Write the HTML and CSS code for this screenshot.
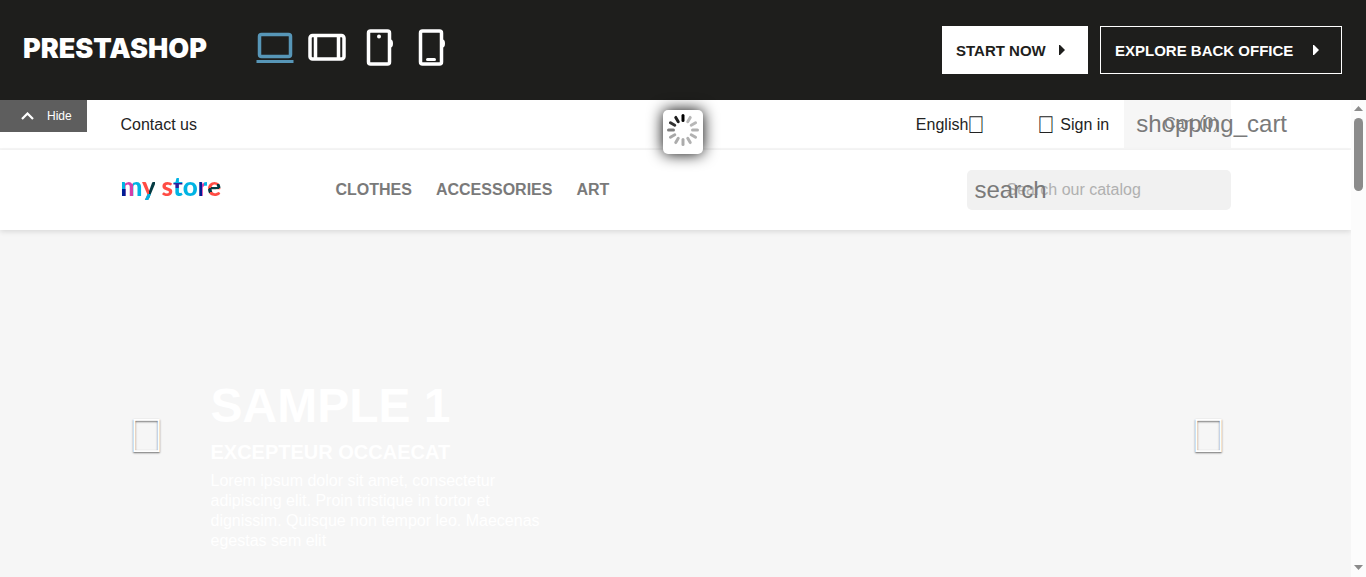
FILE: index.html
```
<!DOCTYPE html>
<html lang="en">
<head>
<meta charset="utf-8">
<title>PrestaShop demo</title>
<link rel="stylesheet" href="styles.css">
</head>
<body>
<header class="demo-bar">
  <a class="brand" href="#">PRESTASHOP</a>
  <div class="devices">
    <button class="device device-active" aria-label="Desktop">
      <svg width="38" height="40" viewBox="0 0 38 40" fill="none" stroke="currentColor" stroke-width="3.500"><rect x="3.500" y="6.500" width="31" height="22" rx="2"/><path d="M0.500 33.500H37.500" stroke-width="3"/></svg>
    </button>
    <button class="device" aria-label="Tablet landscape">
      <svg width="38" height="40" viewBox="0 0 38 40" fill="none" stroke="currentColor" stroke-width="3.500"><rect x="2" y="7.500" width="34" height="23.500" rx="2.500"/><path d="M7.500 8V31M30.500 8V31"/></svg>
    </button>
    <button class="device" aria-label="Tablet portrait">
      <svg width="38" height="40" viewBox="0 0 38 40" fill="none" stroke="currentColor" stroke-width="3.500"><rect x="8.500" y="3" width="21" height="33" rx="2"/><path d="M30.500 11.500q2.500 0 2.500 4t-2.500 4z" fill="currentColor" stroke="none"/><circle cx="19" cy="8.500" r="2" fill="currentColor" stroke="none"/></svg>
    </button>
    <button class="device" aria-label="Mobile">
      <svg width="38" height="40" viewBox="0 0 38 40" fill="none" stroke="currentColor" stroke-width="3.500"><rect x="8.500" y="3" width="21" height="33" rx="2"/><path d="M30.500 11.500q2.500 0 2.500 4t-2.500 4z" fill="currentColor" stroke="none"/><path d="M15.500 31.500H22.500" stroke-width="3" stroke-linecap="round"/></svg>
    </button>
  </div>
  <div class="actions">
    <a class="action action-start" href="#">START NOW <svg width="6" height="10" viewBox="0 0 6 10" fill="currentColor"><path d="M0 0H1L6 5L1 10H0Z"/></svg></a>
    <a class="action action-explore" href="#">EXPLORE BACK OFFICE <svg width="6" height="10" viewBox="0 0 6 10" fill="currentColor"><path d="M0 0H1L6 5L1 10H0Z"/></svg></a>
  </div>
</header>

<div class="frame">
  <button class="hide-toggle"><svg width="13" height="8" viewBox="0 0 13 8" fill="none" stroke="currentColor" stroke-width="2.200"><path d="M1 7L6.500 1.500L12 7"/></svg>Hide</button>
  <div class="loader" role="status" aria-label="Loading">
    <svg width="32" height="32" viewBox="-16 -16 32 32" stroke="#000" stroke-width="3" stroke-linecap="round">
      <path d="M0 -9.500V-14.500"/>
      <path d="M0 -9.500V-14.500" transform="rotate(30)" opacity=".28"/>
      <path d="M0 -9.500V-14.500" transform="rotate(60)" opacity=".28"/>
      <path d="M0 -9.500V-14.500" transform="rotate(90)" opacity=".3"/>
      <path d="M0 -9.500V-14.500" transform="rotate(120)" opacity=".3"/>
      <path d="M0 -9.500V-14.500" transform="rotate(150)" opacity=".3"/>
      <path d="M0 -9.500V-14.500" transform="rotate(180)" opacity=".32"/>
      <path d="M0 -9.500V-14.500" transform="rotate(210)" opacity=".32"/>
      <path d="M0 -9.500V-14.500" transform="rotate(240)" opacity=".34"/>
      <path d="M0 -9.500V-14.500" transform="rotate(270)" opacity=".5"/>
      <path d="M0 -9.500V-14.500" transform="rotate(300)" opacity=".8"/>
      <path d="M0 -9.500V-14.500" transform="rotate(330)" opacity=".88"/>
    </svg>
  </div>

  <div class="shop">
    <nav class="top-nav">
      <div class="container top-row">
        <a class="contact" href="#">Contact us</a>
        <button class="language">English<span class="icon">&#xE5C5;</span></button>
        <a class="sign-in" href="#"><span class="icon">&#xE7FD;</span>Sign in</a>
        <a class="cart" href="#"><span class="icon">shopping_cart</span>Cart (0)</a>
      </div>
    </nav>
    <div class="header">
      <div class="container header-row">
        <a class="store-logo" href="#"><span class="m">m</span><span class="y">y</span> <span class="s">s</span><span class="t">t</span><span class="o">o</span><span class="r">r</span><span class="e">e</span></a>
        <nav class="menu"><a href="#">CLOTHES</a><a href="#">ACCESSORIES</a><a href="#">ART</a></nav>
        <form class="search">
          <span class="icon search-icon">search</span>
          <input type="text" placeholder="Search our catalog" aria-label="Search our catalog">
        </form>
      </div>
    </div>
    <section class="carousel">
      <div class="container slide">
        <button class="arrow" aria-label="Previous">&#xE314;</button>
        <div class="caption">
          <h2>SAMPLE 1</h2>
          <h3>EXCEPTEUR OCCAECAT</h3>
          <p>Lorem ipsum dolor sit amet, consectetur adipiscing elit. Proin tristique in tortor et dignissim. Quisque non tempor leo. Maecenas egestas sem elit</p>
        </div>
        <button class="arrow arrow-next" aria-label="Next">&#xE315;</button>
      </div>
    </section>
  </div>

  <div class="scrollbar" aria-hidden="true">
    <svg width="9" height="5" viewBox="0 0 9 5" fill="#8b8b8b"><path d="M4.500 0L9 5H0Z"/></svg>
    <div class="thumb"></div>
    <svg class="down" width="9" height="5" viewBox="0 0 9 5" fill="#8b8b8b"><path d="M0 0H9L4.500 5Z"/></svg>
  </div>
</div>
</body>
</html>
```
FILE: styles.css
```
* { box-sizing: border-box; }
body {
  margin: 0;
  height: 100vh;
  overflow: hidden;
  display: flex;
  flex-direction: column;
  font: 16px/20px "Liberation Sans", Arial, sans-serif;
  color: #232323;
  background: #fff;
}
a { color: inherit; text-decoration: none; }
button { border: 0; padding: 0; background: none; color: inherit; font: inherit; cursor: pointer; }
svg { display: block; flex: none; }

.demo-bar {
  flex: none;
  display: flex;
  align-items: center;
  height: 100px;
  padding: 0 24px 0 23px;
  background: #1e1e1c;
  color: #fff;
}
.brand { font: 900 27px/32px Inter, sans-serif; width: 233px; margin-bottom: 3px; }
.devices { display: flex; gap: 14px; margin-bottom: 4px; }
.device-active { color: #5796b7; }
.actions { display: flex; gap: 12px; margin-left: auto; }
.action {
  display: flex;
  align-items: center;
  justify-content: space-between;
  height: 48px;
  padding: 1px 22px 0 14px;
  border: 1px solid #fff;
  font-size: 15px;
  font-weight: bold;
}
.action svg { margin-bottom: 2px; }
.action-start { min-width: 146px; padding-left: 13px; background: #fff; color: #1e1e1c; }
.action-explore { min-width: 242px; }

.frame { position: relative; flex: 1; display: flex; min-height: 0; }
.hide-toggle {
  position: absolute;
  top: 0;
  left: 0;
  display: flex;
  align-items: center;
  gap: 13px;
  height: 32px;
  padding: 0 15px 0 21px;
  background: #5e5e5e;
  color: #fff;
  font-size: 12px;
}
.loader {
  position: absolute;
  z-index: 2;
  top: 10px;
  left: calc(50% - 20px);
  width: 40px;
  height: 44px;
  padding: 4px;
  border-radius: 5px;
  background: #fff;
  box-shadow: 0 0 15px #000;
}
.shop { flex: 1; min-width: 0; display: flex; flex-direction: column; overflow: hidden; }
.container { width: 100%; max-width: 1140px; margin: 0 auto; padding: 0 15px; }
.icon { display: inline-block; width: 24px; font-size: 24px; line-height: 24px; white-space: nowrap; }

.top-nav { flex: none; border-bottom: 2px solid #f6f6f6; }
.top-row { display: flex; align-items: center; height: 48px; }
.contact { margin-right: auto; padding-top: 1px; }
.language, .sign-in, .cart { display: flex; align-items: center; }
.language, .sign-in { padding-top: 2px; }
.language { margin-right: 49px; }
.language .icon { margin-left: -4px; }
.sign-in { margin-right: 15px; }
.sign-in .icon { width: 23px; }
.cart { height: 48px; padding: 0 12px; background: #f6f6f6; color: #7a7a7a; }
.cart .icon { margin-right: 4px; }

.header { flex: none; position: relative; box-shadow: 0 2px 5px rgba(0, 0, 0, .11); }
.header-row { display: flex; align-items: center; height: 80px; }
.store-logo { width: 215px; font: 900 26px/30px Lato, sans-serif; margin-bottom: 8px; }
.store-logo span { color: transparent; background-clip: text; -webkit-background-clip: text; }
.m { background-image: linear-gradient(#0000 58%, #011d94 58%), linear-gradient(90deg, #00b3e3 20%, #d33fa8 20% 55%, #00b3e3 55%); background-size: 40% 100%, 100% 100%; background-repeat: no-repeat; }
.y { background-image: linear-gradient(#0000 74%, #00b3e3 74%), linear-gradient(90deg, #ff4c44 55%, #043b42 55%); }
.s { background-color: #ff4c44; }
.t { background-image: linear-gradient(#00b3e3 42%, #2b209b 42% 56%, #00b3e3 56%); }
.o { background-color: #00b3e3; }
.r { background-image: linear-gradient(90deg, #011d94 50%, #d33fa8 50% 70%, #00b3e3 70%); }
.e { background-image: linear-gradient(155deg, #ff4c44 50%, #043b42 50% 62%, #ff4c44 62%); }
.menu { display: flex; gap: 24px; font-weight: bold; color: #7a7a7a; }
.search { position: relative; width: 264px; margin-left: auto; }
.search-icon { position: absolute; top: 8px; left: 8px; color: #7a7a7a; }
.search input {
  display: block;
  width: 100%;
  height: 40px;
  padding: 0 12px 0 40px;
  border: 0;
  border-radius: 5px;
  background: #f1f1f1;
  font: inherit;
}
.search input::placeholder { color: #b0b0b0; opacity: 1; }

.carousel { flex: none; background: #f6f6f6; color: #fff; height: 411px; }
.slide { display: flex; height: 100%; align-items: center; }
.arrow { width: 52px; font-size: 48px; line-height: 56px; text-shadow: 0 1px 2px rgba(0, 0, 0, .6); }
.arrow-next { width: 44px; }
.caption { width: 340px; margin: 57px auto 0 38px; }
.caption h2 { margin: 0; font-size: 48px; line-height: 56px; }
.caption h3 { margin: 8px 0 9px; font-size: 20px; line-height: 20px; }
.caption p { margin: 0; }

.scrollbar {
  width: 15px;
  display: flex;
  flex-direction: column;
  align-items: center;
  padding: 6px 0 7px;
  background: #fcfcfc;
}
.thumb { width: 9px; height: 73px; margin-top: 7px; border-radius: 5px; background: #8b8b8b; }
.down { margin-top: auto; }
```
